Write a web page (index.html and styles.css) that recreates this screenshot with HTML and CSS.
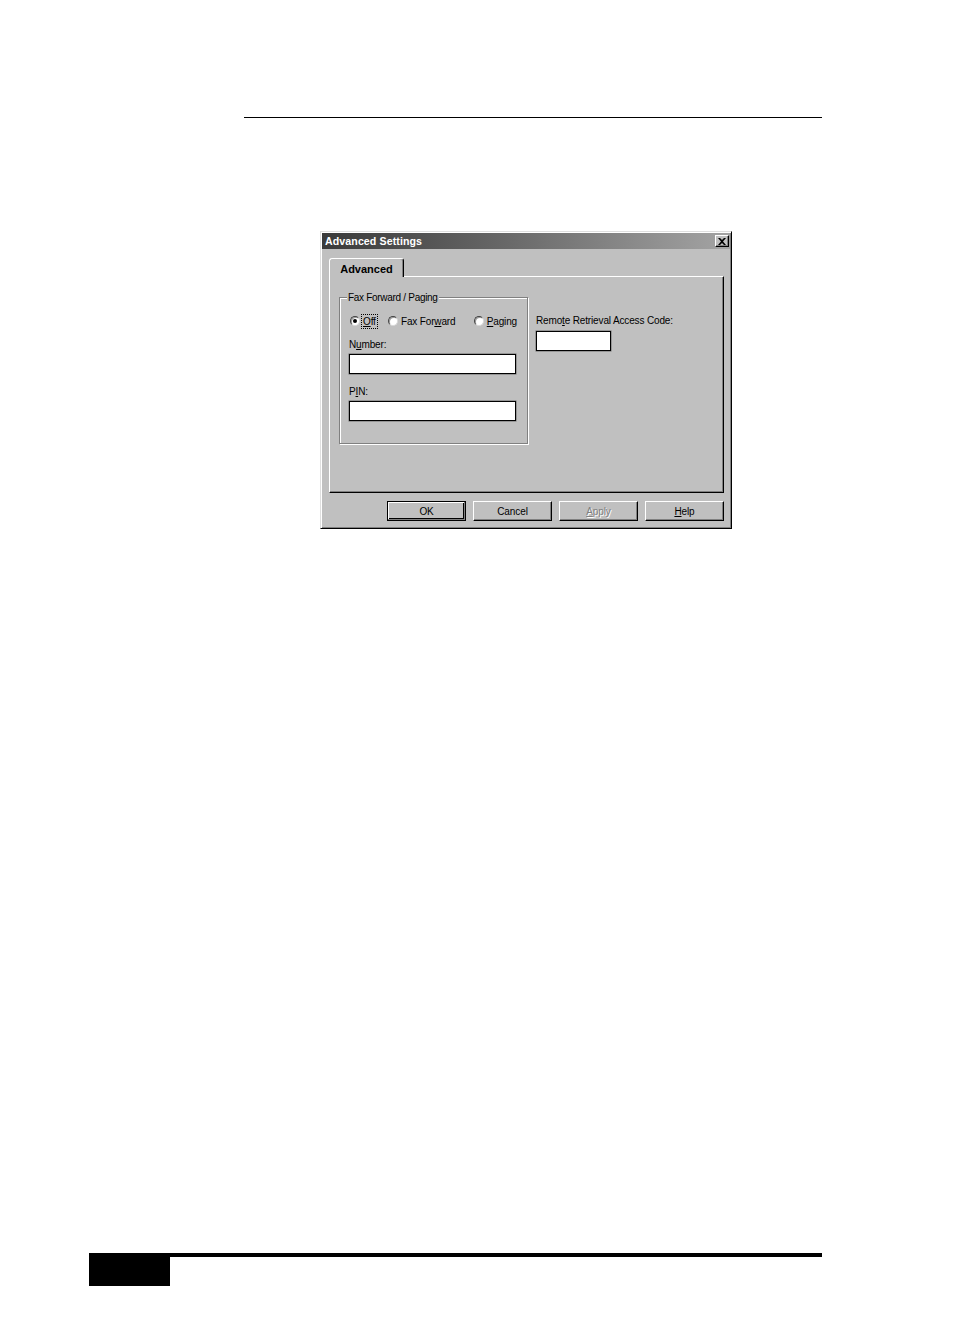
FILE: index.html
```html
<!DOCTYPE html>
<html>
<head>
<meta charset="utf-8">
<title>Advanced Settings</title>
<link rel="stylesheet" href="styles.css">
</head>
<body>
<div class="page">
  <div class="rule-top"></div>

  <div class="dialog">
    <div class="titlebar">
      <span class="title">Advanced Settings</span>
      <span class="close">
        <svg width="8" height="7" viewBox="0 0 8 7"><path d="M0 0h2l2 2 2-2h2L5 3.5 8 7H6L4 5 2 7H0l3-3.5z" fill="#000"/></svg>
      </span>
    </div>
    <div class="dlg-body">
      <div class="tabs">
        <div class="tab">Advanced</div>
      </div>
      <div class="panel">
        <div class="group">
          <div class="group-title">Fax Forward / Paging</div>
          <div class="radios">
            <div class="radio-item w-off">
              <span class="radio checked"><span class="dot"></span></span>
              <span class="focus"><u>O</u>ff</span>
            </div>
            <div class="radio-item w-fax">
              <span class="radio"></span>
              <span>Fax For<u>w</u>ard</span>
            </div>
            <div class="radio-item">
              <span class="radio"></span>
              <span><u>P</u>aging</span>
            </div>
          </div>
          <div class="field-label">N<u>u</u>mber:</div>
          <div class="textbox wide"></div>
          <div class="field-label second">P<u>I</u>N:</div>
          <div class="textbox wide"></div>
        </div>
        <div class="right-col">
          <div class="field-label top">Remo<u>t</u>e Retrieval Access Code:</div>
          <div class="textbox short"></div>
        </div>
      </div>
      <div class="buttons">
        <div class="btn default"><span class="btn-in">OK</span></div>
        <div class="btn"><span class="btn-in">Cancel</span></div>
        <div class="btn disabled"><span class="btn-in"><u>A</u>pply</span></div>
        <div class="btn"><span class="btn-in"><u>H</u>elp</span></div>
      </div>
    </div>
  </div>

  <div class="footer">
    <div class="footer-box"></div>
  </div>
</div>
</body>
</html>
```
FILE: styles.css
```css
* { box-sizing: border-box; }
html, body { margin: 0; padding: 0; background: #fff; }
body {
  font-family: "Liberation Sans", Arial, sans-serif;
  font-size: 10px;
  color: #000;
}
.page {
  width: 954px;
  height: 1343px;
  overflow: hidden;
  padding-top: 117px;
}
.rule-top {
  margin-left: 244px;
  width: 578px;
  height: 1px;
  background: #000;
}

/* dialog window */
.dialog {
  margin-top: 113px;
  margin-left: 320px;
  width: 412px;
  height: 298px;
  background: #c0c0c0;
  border: 1px solid;
  border-color: #dfdfdf #000 #000 #dfdfdf;
  box-shadow: inset 1px 1px #fff, inset -1px -1px #808080;
  padding: 1px;
}
.titlebar {
  height: 16px;
  background: linear-gradient(90deg, #3a3a3a 0%, #686868 45%, #a4a4a4 100%);
  display: flex;
  align-items: center;
  justify-content: space-between;
  padding: 0 1px 0 3px;
}
.title {
  color: #fff;
  font-weight: bold;
  font-size: 10.6px;
  letter-spacing: 0.1px;
}
.close {
  width: 14px;
  height: 12px;
  background: #c0c0c0;
  border: 1px solid;
  border-color: #fff #000 #000 #fff;
  box-shadow: inset -1px -1px #808080;
  display: flex;
  align-items: center;
  justify-content: center;
}
.close svg { display: block; }

.dlg-body {
  padding: 9px 6px 0 7px;
}
.tabs {
  display: flex;
  height: 18px;
}
.tab {
  width: 75px;
  height: 19px;
  margin-bottom: -1px;
  position: relative;
  z-index: 1;
  background: #c0c0c0;
  border: 1px solid;
  border-bottom: none;
  border-color: #fff #000 transparent #fff;
  border-radius: 3px 3px 0 0;
  box-shadow: inset -1px 0 #808080;
  font-weight: bold;
  font-size: 11px;
  text-align: center;
  line-height: 20px;
}
.panel {
  width: 395px;
  height: 217px;
  border: 1px solid;
  border-color: #fff #000 #000 #fff;
  box-shadow: inset -1px -1px #808080;
  padding: 20px 0 0 9px;
  display: flex;
  gap: 8px;
}

/* group box */
.group {
  width: 189px;
  height: 147px;
  border: 1px solid #808080;
  box-shadow: inset 1px 1px #fff, 1px 1px #fff;
  padding: 0 10px 0 9px;
  display: flex;
  flex-direction: column;
  letter-spacing: -0.15px;
}
.group-title {
  align-self: flex-start;
  margin: -6px 0 0 -2px;
  padding: 0 1px;
  background: #c0c0c0;
  line-height: 12px;
  height: 12px;
  letter-spacing: -0.3px;
  position: relative;
}
.radios {
  display: flex;
  align-items: center;
  height: 14px;
  margin-top: 10px;
  margin-left: 1px;
}
.radio-item {
  display: flex;
  align-items: center;
  gap: 3px;
}
.w-off { width: 38px; }
.w-fax { width: 86px; }
.radio {
  width: 10px;
  height: 10px;
  border-radius: 50%;
  background: #fff;
  border: 1px solid;
  border-color: #404040 #d8d8d8 #d8d8d8 #404040;
  box-shadow: inset 1px 1px #9a9a9a;
  display: flex;
  align-items: center;
  justify-content: center;
  flex: none;
}
.dot {
  width: 4px;
  height: 4px;
  border-radius: 50%;
  background: #000;
}
.focus {
  outline: 1px dotted #000;
  padding: 0 1px;
  margin-left: -1px;
  line-height: 13px;
}
u { text-decoration: underline; text-underline-offset: 1px; }

.field-label {
  line-height: 12px;
  height: 13px;
  padding-top: 1px;
  margin-top: 10px;
}
.field-label.second { margin-top: 11px; }
.field-label.top { margin-top: 17px; }
.textbox {
  height: 20px;
  margin-top: 3px;
  background: #fff;
  border: 1px solid #000;
  box-shadow: 0 0 0 0.5px #6a6a6a;
}
.textbox.wide { width: 167px; }
.textbox.short { width: 75px; margin-top: 4px; }

.right-col {
  display: flex;
  flex-direction: column;
  letter-spacing: -0.15px;
}

/* buttons */
.buttons {
  display: flex;
  justify-content: flex-end;
  gap: 7px;
  margin-top: 8px;
  width: 395px;
}
.btn {
  width: 79px;
  height: 20px;
  background: #c0c0c0;
  border: 1px solid;
  border-color: #fff #000 #000 #fff;
  box-shadow: inset -1px -1px #808080;
  display: flex;
}
.btn-in {
  flex: 1;
  display: flex;
  align-items: center;
  justify-content: center;
  letter-spacing: -0.1px;
}
.btn.default {
  border: 1px solid #000;
  box-shadow: inset 1px 1px #fff, inset -2px -2px #000, inset -1px -1px #808080;
}
.btn.default .btn-in {
  box-shadow: inset -1px -1px #808080;
}
.btn.disabled .btn-in {
  color: #808080;
  text-shadow: 1px 1px #fff;
}

/* footer */
.footer {
  margin-top: 724px;
  margin-left: 89px;
  width: 733px;
  border-top: 4px solid #000;
  display: flex;
}
.footer-box {
  width: 81px;
  height: 29px;
  background: #000;
}
```
